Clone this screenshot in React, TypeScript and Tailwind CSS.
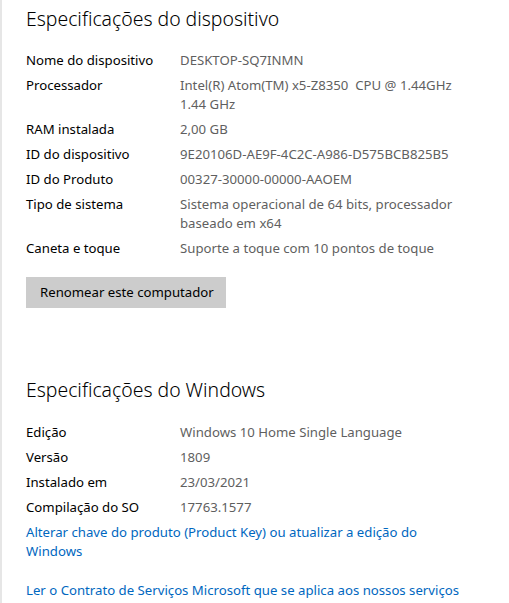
const font = { fontFamily: '"Noto Sans", "Open Sans", sans-serif' };

type Row = { label: string; value: string[] };

const device: Row[] = [
  { label: 'Nome do dispositivo', value: ['DESKTOP-SQ7INMN'] },
  { label: 'Processador', value: ['Intel(R) Atom(TM) x5-Z8350  CPU @ 1.44GHz', '1.44 GHz'] },
  { label: 'RAM instalada', value: ['2,00 GB'] },
  { label: 'ID do dispositivo', value: ['9E20106D-AE9F-4C2C-A986-D575BCB825B5'] },
  { label: 'ID do Produto', value: ['00327-30000-00000-AAOEM'] },
  { label: 'Tipo de sistema', value: ['Sistema operacional de 64 bits, processador', 'baseado em x64'] },
  { label: 'Caneta e toque', value: ['Suporte a toque com 10 pontos de toque'] },
];

const windows: Row[] = [
  { label: 'Edição', value: ['Windows 10 Home Single Language'] },
  { label: 'Versão', value: ['1809'] },
  { label: 'Instalado em', value: ['23/03/2021'] },
  { label: 'Compilação do SO', value: ['17763.1577'] },
];

function Specs({ rows }: { rows: Row[] }) {
  return (
    <div className="flex flex-col gap-[6px]">
      {rows.map((r) => (
        <div key={r.label} className="flex text-[13.2px] leading-[19px]">
          <div className="w-[154px] shrink-0 text-black">{r.label}</div>
          <div className="text-[#5f5f5f] whitespace-pre">
            {r.value.map((v) => (
              <div key={v}>{v}</div>
            ))}
          </div>
        </div>
      ))}
    </div>
  );
}

export default function App() {
  return (
    <div className="w-[509px] h-[603px] overflow-hidden bg-white flex" style={font}>
      <div className="w-[2px] shrink-0 bg-[#e6e6e6]" />
      <div className="pl-[24px] pt-[5px] flex flex-col">
        <h1 className="text-[19.4px] leading-[28px] font-light text-black mb-[18px]">
          Especificações do dispositivo
        </h1>
        <Specs rows={device} />
        <button className="mt-[19px] w-[200px] h-[31px] bg-[#cccccc] text-[13.2px] text-black text-left pl-[14px]">
          Renomear este computador
        </button>
        <h1 className="mt-[68px] text-[19.4px] leading-[28px] font-light text-black mb-[19px]">
          Especificações do Windows
        </h1>
        <Specs rows={windows} />
        <div className="mt-[6px] text-[13.2px] leading-[19px] text-[#0067c0] w-[420px]">
          Alterar chave do produto (Product Key) ou atualizar a edição do Windows
        </div>
        <div className="mt-[20px] text-[13.2px] leading-[19px] text-[#0067c0] whitespace-nowrap">
          Ler o Contrato de Serviços Microsoft que se aplica aos nossos serviços
        </div>
      </div>
    </div>
  );
}
